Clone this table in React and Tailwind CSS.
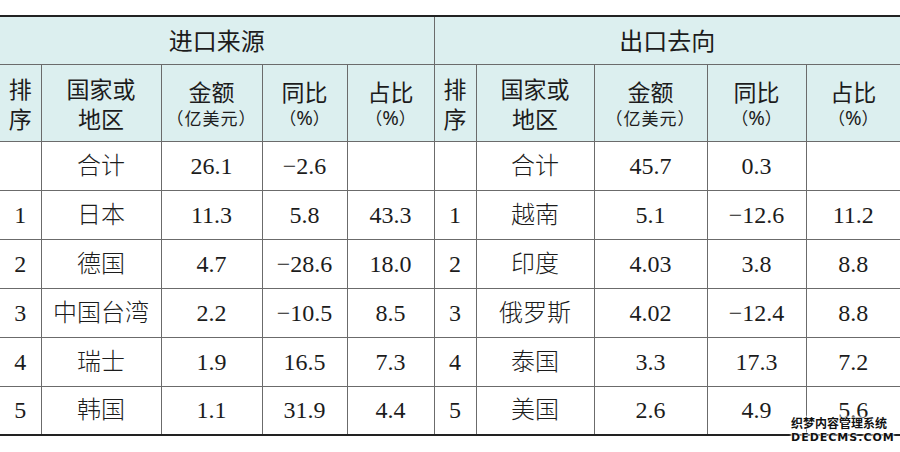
import React from "react";

const left = [
  ["", "合计", "26.1", "−2.6", ""],
  ["1", "日本", "11.3", "5.8", "43.3"],
  ["2", "德国", "4.7", "−28.6", "18.0"],
  ["3", "中国台湾", "2.2", "−10.5", "8.5"],
  ["4", "瑞士", "1.9", "16.5", "7.3"],
  ["5", "韩国", "1.1", "31.9", "4.4"],
];
const right = [
  ["", "合计", "45.7", "0.3", ""],
  ["1", "越南", "5.1", "−12.6", "11.2"],
  ["2", "印度", "4.03", "3.8", "8.8"],
  ["3", "俄罗斯", "4.02", "−12.4", "8.8"],
  ["4", "泰国", "3.3", "17.3", "7.2"],
  ["5", "美国", "2.6", "4.9", "5.6"],
];

const sans = "font-['Noto_Sans_CJK_SC','Noto_Sans',sans-serif]";
const serif = "font-['Liberation_Serif','Noto_Sans_CJK_SC',serif]";

function Pct() {
  return (
    <div className="text-[17px] leading-[24px]">
      （<span className="text-[20px] font-['Noto_Sans',sans-serif]">%</span>）
    </div>
  );
}

function Head2({ first }) {
  const cls = "border border-[#6b6b6b] bg-[#dcefef] text-center align-middle text-[#1c1c1c] " + sans;
  return (
    <>
      <td className={cls + (first ? " border-l-0" : "")}>
        <div className="text-[23px] leading-[30px]">排<br />序</div>
      </td>
      <td className={cls}>
        <div className="text-[23px] leading-[30px]">国家或<br />地区</div>
      </td>
      <td className={cls}>
        <div className="text-[23px] leading-[30px]">金额</div>
        <div className="text-[17px] leading-[24px] tracking-[1px]">（亿美元）</div>
      </td>
      <td className={cls}>
        <div className="text-[23px] leading-[30px]">同比</div>
        <Pct />
      </td>
      <td className={cls + (first ? "" : " border-r-0")}>
        <div className="text-[23px] leading-[30px]">占比</div>
        <Pct />
      </td>
    </>
  );
}

function DataCells({ row, first }) {
  const cls = "border border-[#6b6b6b] text-center align-middle text-[24px] font-light text-[#1c1c1c] " + serif;
  return row.map((v, i) => (
    <td
      key={i}
      className={
        cls +
        (first && i === 0 ? " border-l-0" : "") +
        (!first && i === 4 ? " border-r-0" : "")
      }
    >
      {v}
    </td>
  ));
}

export default function App() {
  return (
    <div className="relative w-[900px] h-[452px] bg-white overflow-hidden">
      <div className="pt-[15px]">
        <table className="w-[900px] table-fixed border-collapse border-t-2 border-b-2 border-t-[#222] border-b-[#222]">
          <colgroup>
            <col className="w-[41px]" />
            <col className="w-[120px]" />
            <col className="w-[101px]" />
            <col className="w-[85px]" />
            <col className="w-[87px]" />
            <col className="w-[42px]" />
            <col className="w-[118px]" />
            <col className="w-[113px]" />
            <col className="w-[99px]" />
            <col className="w-[94px]" />
          </colgroup>
          <tbody>
            <tr className="h-[48px]">
              <td colSpan={5} className={"border border-[#6b6b6b] border-l-0 border-t-0 bg-[#dcefef] text-center text-[24px] text-[#1c1c1c] " + sans}>
                进口来源
              </td>
              <td colSpan={5} className={"border border-[#6b6b6b] border-r-0 border-t-0 bg-[#dcefef] text-center text-[24px] text-[#1c1c1c] " + sans}>
                出口去向
              </td>
            </tr>
            <tr className="h-[77px]">
              <Head2 first />
              <Head2 />
            </tr>
            {left.map((r, i) => (
              <tr key={i} className="h-[49px]">
                <DataCells row={r} first />
                <DataCells row={right[i]} />
              </tr>
            ))}
          </tbody>
        </table>
      </div>
      <div className={"absolute left-[791px] top-[417px] flex flex-col items-start leading-none font-bold text-[#111] [text-shadow:0_0_1px_#fff,0_0_2px_#fff,0_0_3px_#fff,0_0_3px_#fff] " + sans}>
        <div className="text-[12px]">织梦内容管理系统</div>
        <div className="text-[11px] tracking-[1px] mt-[3px] font-['DejaVu_Sans',sans-serif]">DEDECMS.COM</div>
      </div>
    </div>
  );
}
